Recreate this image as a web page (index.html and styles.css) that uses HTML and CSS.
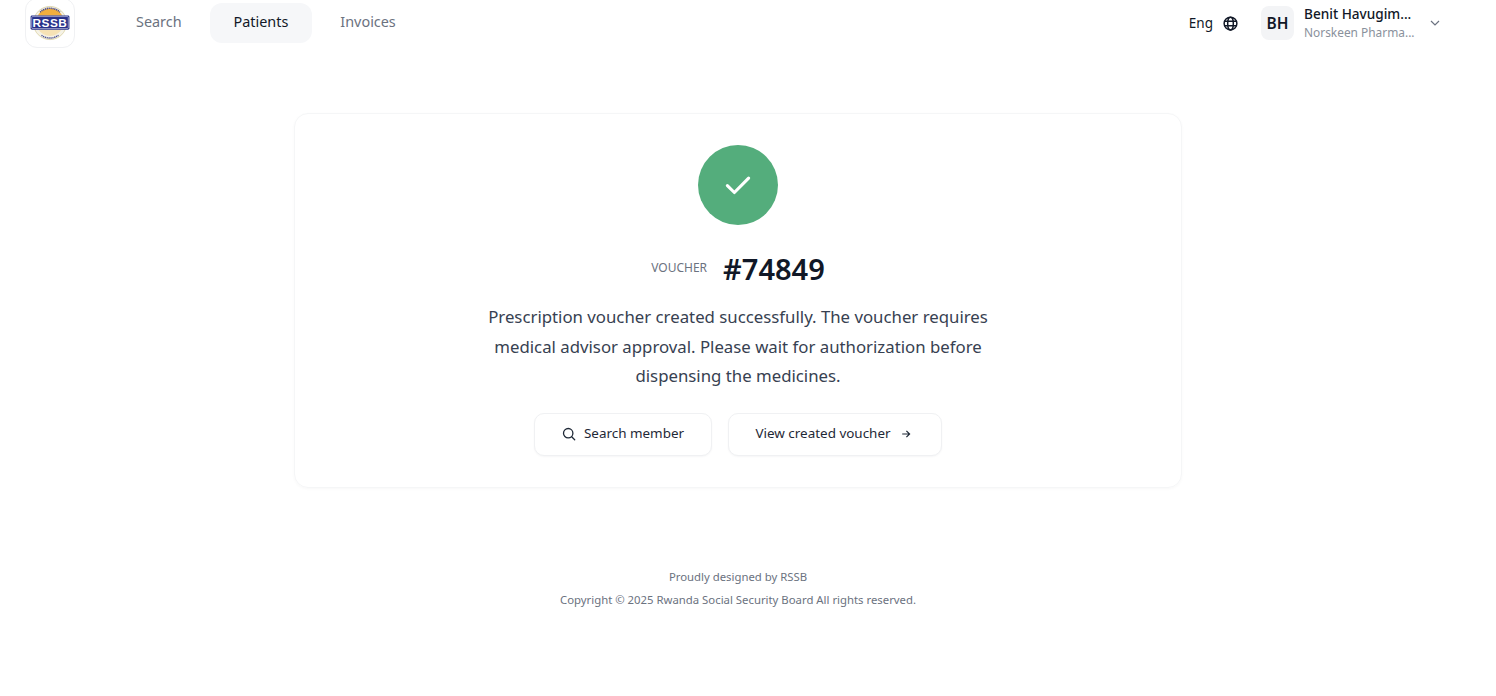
FILE: index.html
```html
<!DOCTYPE html>
<html lang="en">
<head>
<meta charset="utf-8">
<title>Voucher created</title>
<link rel="stylesheet" href="styles.css">
</head>
<body>
<header class="topbar">
  <div class="logo-box">
    <svg class="logo" viewBox="0 0 42 38" aria-label="RSSB logo">
      <circle cx="21" cy="19" r="17.500" fill="#f5f2e6" stroke="#d9cf9f" stroke-width=".8"/>
      <path d="M8 11a15 15 0 0 1 26 0z" fill="#f1ae3f"/>
      <path d="M9 26h24a14 14 0 0 1-24 0z" fill="#f6e2b5"/>
      <path d="M10.500 7.500a15.500 15.500 0 0 1 21 0" fill="none" stroke="#4a4f90" stroke-width="1.700" stroke-dasharray="1.300 .7"/>
      <path d="M12 32a15.500 15.500 0 0 0 18 0" fill="none" stroke="#4a4f90" stroke-width="1.500" stroke-dasharray="1.300 .7"/>
      <rect x=".5" y="11" width="41" height="15" rx="1.500" fill="#27308a"/>
      <rect x="1.700" y="12.200" width="38.600" height="12.600" rx="1" fill="none" stroke="#fff" stroke-width=".5"/>
      <text x="21" y="23.500" class="logo-text" text-anchor="middle">RSSB</text>
    </svg>
  </div>
  <nav class="nav">
    <a class="nav-link">Search</a>
    <a class="nav-link is-active">Patients</a>
    <a class="nav-link">Invoices</a>
  </nav>
  <div class="right">
    <div class="lang">
      <span>Eng</span>
      <svg class="globe" viewBox="0 0 16 16">
        <circle cx="8" cy="8" r="6.800"/>
        <ellipse cx="8" cy="8" rx="3" ry="6.800"/>
        <path d="M1.500 5.600h13M1.500 10.400h13"/>
      </svg>
    </div>
    <div class="user">
      <div class="avatar">BH</div>
      <div class="user-text">
        <div class="user-name">Benit Havugim...</div>
        <div class="user-org">Norskeen Pharma...</div>
      </div>
      <svg class="chev" viewBox="0 0 12 12"><path d="M2 4l4 4 4-4"/></svg>
    </div>
  </div>
</header>
<main class="main">
  <section class="card">
    <div class="success">
      <svg viewBox="0 0 24 24"><path d="M3.500 12.500l5.600 5.500L20.500 6.500"/></svg>
    </div>
    <div class="voucher">
      <span class="voucher-label">VOUCHER</span>
      <span class="voucher-num">#74849</span>
    </div>
    <p class="message">Prescription voucher created successfully. The voucher requires medical advisor approval. Please wait for authorization before dispensing the medicines.</p>
    <div class="actions">
      <button class="btn btn-search">
        <svg class="btn-icon" viewBox="0 0 14 14"><circle cx="6.200" cy="6.200" r="4.700"/><path d="M9.700 9.700l3 3"/></svg>
        <span class="btn-label">Search member</span>
      </button>
      <button class="btn btn-view">
        <span class="btn-label">View created voucher</span>
        <svg class="btn-arrow" viewBox="0 0 12 12"><path d="M2.200 6h7.400M6.400 2.800L9.600 6 6.400 9.200"/></svg>
      </button>
    </div>
  </section>
  <footer class="footer">
    <div>Proudly designed by RSSB</div>
    <div>Copyright © 2025 Rwanda Social Security Board All rights reserved.</div>
  </footer>
</main>
</body>
</html>
```
FILE: styles.css
```css
* { box-sizing: border-box; }
html, body { margin: 0; height: 100%; background: #fff; overflow: hidden; }
body { width: 1476px; font-family: "Noto Sans", "Open Sans", sans-serif; color: #111827; }

.topbar { display: flex; align-items: center; height: 46px; padding: 0 35px 0 25px; }
.logo-box {
  width: 50px; height: 50px; border: 1px solid #f0f1f3; border-radius: 12px;
  display: flex; align-items: center; justify-content: center; flex: none;
}
.logo { width: 40px; height: 36px; }
.logo-text { font: 700 12.500px "Liberation Sans", sans-serif; fill: #fff; letter-spacing: .5px; }

.nav { display: flex; gap: 4px; margin-left: 37px; }
.nav-link { padding: 0 24px; height: 40px; line-height: 38px; font-size: 14.400px; color: #6b7280; border-radius: 12px; }
.is-active { background: #f6f7f9; color: #111827; }

.right { margin-left: auto; display: flex; align-items: center; }
.lang { display: flex; align-items: center; gap: 10px; font-size: 13.500px; color: #111827; margin-right: 23px; }
.globe { width: 15px; height: 15px; fill: none; stroke: #111827; stroke-width: 1.600; }
.user { display: flex; align-items: center; }
.avatar {
  width: 33px; height: 34px; background: #f3f4f6; border-radius: 8px; font-size: 15.500px; font-weight: 600;
  display: flex; align-items: center; justify-content: center; margin-right: 10px;
}
.user-name { font-size: 13.600px; font-weight: 500; line-height: 18px; white-space: nowrap; }
.user-org { font-size: 11.900px; color: #8a919c; line-height: 18px; margin-top: .5px; white-space: nowrap; }
.user-text { width: 118px; }
.chev { width: 12px; height: 12px; margin-left: 7px; fill: none; stroke: #6b7280; stroke-width: 1.200; }

.main { display: flex; flex-direction: column; align-items: center; }
.card {
  width: 888px; margin-top: 67px; padding: 31px 0 31px; border: 1px solid #f5f6f7; border-radius: 14px;
  box-shadow: 0 1px 3px rgba(17, 24, 39, .03);
  display: flex; flex-direction: column; align-items: center;
}
.success { width: 80px; height: 80px; border-radius: 50%; background: #54ad7c; display: flex; align-items: center; justify-content: center; }
.success svg { width: 30px; height: 30px; fill: none; stroke: #fff; stroke-width: 2.500; stroke-linecap: round; stroke-linejoin: round; }

.voucher { display: flex; align-items: center; gap: 16px; margin-top: 23px; height: 40px; }
.voucher-label { font-size: 12px; color: #6b7280; margin-top: -1px; }
.voucher-num { font-size: 29px; font-weight: 600; color: #111827; }

.message { width: 520px; margin: 14px 0 0; text-align: center; font-size: 16.800px; line-height: 29.600px; color: #374151; }

.actions { display: flex; gap: 16px; margin-top: 22px; }
.btn {
  display: flex; align-items: center; justify-content: center; height: 43px; background: #fff;
  border: 1px solid #f0f1f3; border-radius: 10px; box-shadow: 0 1px 2px rgba(17, 24, 39, .04);
  font: 13.450px "Noto Sans", "Open Sans", sans-serif; color: #1f2937;
}
.btn-label { position: relative; top: -1px; }
.btn-search { width: 178px; gap: 8px; padding-left: 6px; }
.btn-view { width: 214px; gap: 9.500px; padding-right: 8.500px; }
.btn-icon { width: 14px; height: 14px; fill: none; stroke: #1f2937; stroke-width: 1.300; stroke-linecap: round; }
.btn-arrow { width: 12px; height: 12px; fill: none; stroke: #1f2937; stroke-width: 1.200; }

.footer { margin-top: 77px; text-align: center; font-size: 11.350px; line-height: 23px; color: #6b7280; }
```
